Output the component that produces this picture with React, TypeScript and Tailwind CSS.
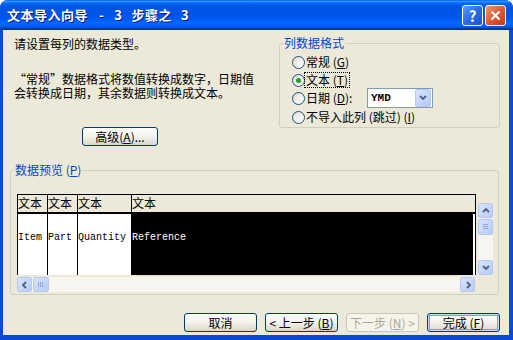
import React from 'react';

const cjk = "font-['Noto_Sans_CJK_SC','Noto_Sans',sans-serif]";
const mono = "font-['Liberation_Mono',monospace]";

const XpButton = ({
  children,
  className = '',
  disabled = false,
  isDefault = false,
}: {
  children: React.ReactNode;
  className?: string;
  disabled?: boolean;
  isDefault?: boolean;
}) => (
  <div
    className={`h-[19px] flex items-center justify-center rounded-[3px] border text-[12px] leading-none whitespace-nowrap ${
      disabled
        ? 'border-[#C9C7BA] text-[#ACA899] bg-[#F5F4EA]'
        : 'border-[#003C74] text-black bg-linear-to-b from-white via-[#F3F2EC] to-[#D9D5C9]'
    } ${isDefault ? 'shadow-[inset_0_0_0_1px_#C9D9F8,inset_0_0_0_2px_#7C9CE6]' : ''} ${className}`}
  >
    {children}
  </div>
);

const Chevron = ({ dir }: { dir: 'up' | 'down' | 'left' | 'right' }) => {
  const d = {
    up: 'M1 5 L4 2 L7 5',
    down: 'M1 2 L4 5 L7 2',
    left: 'M5 1 L2 4 L5 7',
    right: 'M3 1 L6 4 L3 7',
  }[dir];
  return (
    <svg width="8" height="8" viewBox="0 0 8 8">
      <path d={d} stroke="#4D6185" strokeWidth="1.8" fill="none" />
    </svg>
  );
};

const ScrollBtn = ({ children, className = '' }: { children?: React.ReactNode; className?: string }) => (
  <div
    className={`w-[15px] h-[15px] shrink-0 flex items-center justify-center rounded-[2px] border border-[#B5C8F3] bg-linear-to-br from-[#D9E4FD] to-[#B7CBF6] ${className}`}
  >
    {children}
  </div>
);

const Radio = ({ checked = false }: { checked?: boolean }) => (
  <span className="w-[13px] h-[13px] shrink-0 rounded-full border border-[#1C5180] bg-linear-to-br from-[#DCD9CB] via-[#F2F1EC] to-white flex items-center justify-center">
    {checked && <span className="w-[5px] h-[5px] rounded-full bg-[#21A121]" />}
  </span>
);

const TitleBar = () => (
  <div className="h-[30px] shrink-0 flex items-center pl-[7px] pr-[7px] bg-[linear-gradient(to_bottom,#0058EE_0%,#3593FF_4%,#288EFF_6%,#127DFF_8%,#036FFC_10%,#0262EE_14%,#0057E5_20%,#0054E3_24%,#0055EB_56%,#005BF5_66%,#026AFE_76%,#0062EF_86%,#0052D6_92%,#0040AB_94%,#003092_100%)]">
    <div className="flex-1 flex items-center text-white font-bold text-[13px] tracking-[0.5px] [text-shadow:1px_1px_0_#0A1883]">
      <span>文本导入向导</span>
      <span className="ml-[11px]">-</span>
      <span className="ml-[10px]">3</span>
      <span className="ml-[9px]">步骤之</span>
      <span className="ml-[9px]">3</span>
    </div>
    <div className="flex gap-[2px]">
      <div className="w-[21px] h-[21px] rounded-[3px] border border-white bg-linear-to-br from-[#5C9BFF] via-[#2A6AE8] to-[#1D55D0] flex items-center justify-center text-white font-bold text-[15px] leading-none">
        ?
      </div>
      <div className="w-[21px] h-[21px] rounded-[3px] border border-white bg-linear-to-br from-[#F0946E] via-[#DE5A32] to-[#C23C14] flex items-center justify-center">
        <svg width="11" height="11" viewBox="0 0 11 11">
          <path d="M1.5 1.5 L9.5 9.5 M9.5 1.5 L1.5 9.5" stroke="white" strokeWidth="2" />
        </svg>
      </div>
    </div>
  </div>
);

export default function App() {
  return (
    <div className={`w-[513px] h-[340px] flex flex-col rounded-t-[8px] overflow-hidden bg-[#0A48D6] text-[12px] text-black ${cjk}`}>
      <TitleBar />
      <div className="ml-[3px] mr-[4px] mb-[5px] flex-1 bg-[#ECE9D8] flex flex-col pt-[6px] pl-[7px] pr-[9px]">
        {/* top row */}
        <div className="h-[127px] flex">
          <div className="w-[269px] pl-[4px] flex flex-col items-start">
            <p className="mt-[1px] leading-[14px]">请设置每列的数据类型。</p>
            <div className="mt-[21px] flex flex-col whitespace-nowrap">
              <p className="h-[14px] leading-[14px]">
                <span className="inline-block w-[12px] text-right">“</span>常规
                <span className="inline-block w-[12px]">”</span>数据格式将数值转换成数字，日期值
              </p>
              <p className="h-[14px] leading-[14px]">会转换成日期，其余数据则转换成文本。</p>
            </div>
            <XpButton className="mt-[27px] ml-[68px] w-[76px]">
              高级(<u>A</u>)...
            </XpButton>
          </div>

          <fieldset className="w-[221px] h-[92px] border border-[#D0D0BF] rounded-[3px] px-[3px]">
            <legend className="px-[1px] text-[#0046D5] leading-[14px]">列数据格式</legend>
            <div className="pl-[9px] pt-[3px] flex flex-col">
              <div className="h-[18px] flex items-center gap-[1px]">
                <Radio />
                <span>
                  常规 (<u>G</u>)
                </span>
              </div>
              <div className="h-[18px] flex items-center gap-[1px]">
                <Radio checked />
                <span className="leading-[12px] outline-1 outline-dotted outline-black outline-offset-[1px]">
                  文本 (<u>T</u>)
                </span>
              </div>
              <div className="h-[18px] flex items-center gap-[1px]">
                <Radio />
                <span className="w-[60px]">
                  日期 (<u>D</u>):
                </span>
                <div className="w-[66px] h-[20px] bg-white border border-[#7F9DB9] flex items-center">
                  <span className={`flex-1 pl-[3px] text-[11px] font-bold ${mono}`}>YMD</span>
                  <div className="w-[16px] h-[18px] mr-px rounded-[2px] border border-[#B5C8F3] bg-linear-to-br from-[#D9E4FD] to-[#B4C8F6] flex items-center justify-center">
                    <Chevron dir="down" />
                  </div>
                </div>
              </div>
              <div className="h-[18px] mt-[1px] flex items-center gap-[1px]">
                <Radio />
                <span>
                  不导入此列 (跳过) (<u>I</u>)
                </span>
              </div>
            </div>
          </fieldset>
        </div>

        {/* data preview */}
        <fieldset className="w-[489px] border border-[#D0D0BF] rounded-[3px] px-[3px] pb-[2px]">
          <legend className="px-[1px] text-[#0046D5] leading-[14px]">
            数据预览 (<u>P</u>)
          </legend>
          <div className="pl-[3px] pt-[17px] flex">
            <div className="flex flex-col">
              <div className="w-[459px] h-[81px] border-l border-t border-r border-black flex flex-col">
                <div className="h-[19px] flex bg-[#ECE9D8] border-b-2 border-black leading-[16px]">
                  <div className="w-[30px] border-r border-black">文本</div>
                  <div className="w-[30px] border-r border-black">文本</div>
                  <div className="w-[54px] border-r border-black">文本</div>
                  <div className="flex-1">文本</div>
                </div>
                <div className={`flex-1 flex text-[10px] leading-[12px] ${mono}`}>
                  <div className="w-[30px] bg-white border-r border-black pt-[18px]">Item</div>
                  <div className="w-[30px] bg-white border-r border-black pt-[18px]">Part</div>
                  <div className="w-[54px] bg-white border-r border-black pt-[18px]">Quantity</div>
                  <div className="flex-1 bg-black text-white border-r-2 border-white pt-[18px]">Reference</div>
                </div>
              </div>
              <div className="w-[458px] h-[15px] mt-[2px] flex bg-[#F6F5F0]">
                <ScrollBtn>
                  <Chevron dir="left" />
                </ScrollBtn>
                <ScrollBtn className="ml-px w-[16px]">
                  <svg width="6" height="5" viewBox="0 0 6 5">
                    <path d="M0.5 0 V5 M2.5 0 V5 M4.5 0 V5" stroke="#8FA8E0" strokeWidth="1" />
                  </svg>
                </ScrollBtn>
                <div className="flex-1" />
                <ScrollBtn>
                  <Chevron dir="right" />
                </ScrollBtn>
              </div>
            </div>
            <div className="ml-[2px] mt-[9px] w-[15px] h-[72px] flex flex-col bg-[#F6F5F0]">
              <ScrollBtn>
                <Chevron dir="up" />
              </ScrollBtn>
              <ScrollBtn className="mt-px h-[16px]">
                <svg width="5" height="6" viewBox="0 0 5 6">
                  <path d="M0 0.5 H5 M0 2.5 H5 M0 4.5 H5" stroke="#8FA8E0" strokeWidth="1" />
                </svg>
              </ScrollBtn>
              <div className="flex-1" />
              <ScrollBtn>
                <Chevron dir="down" />
              </ScrollBtn>
            </div>
          </div>
        </fieldset>

        {/* buttons */}
        <div className="mt-[18px] flex justify-end gap-[8px]">
          <XpButton className="w-[73px]">取消</XpButton>
          <XpButton className="w-[73px]">
            &lt;&nbsp;上一步 (<u>B</u>)
          </XpButton>
          <XpButton className="w-[73px]" disabled>
            下一步 (<u>N</u>)&nbsp;&gt;
          </XpButton>
          <XpButton className="w-[73px]" isDefault>
            完成 (<u>F</u>)
          </XpButton>
        </div>
      </div>
    </div>
  );
}
